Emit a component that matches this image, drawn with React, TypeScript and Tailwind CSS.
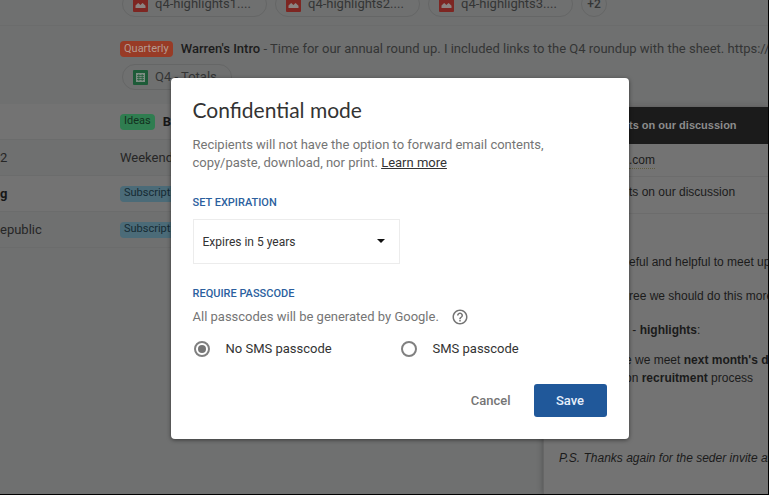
import { useState } from "react";
import { MdHelpOutline } from "react-icons/md";

const highlights = ["q4-highlights1....", "q4-highlights2....", "q4-highlights3...."];

const rows = [
  {
    id: 1,
    sender: "",
    unread: true,
    label: "Ideas",
    labelClass: "bg-[#2f7d50] text-[#12301e]",
    subject: "Business trip",
  },
  {
    id: 2,
    sender: "2",
    unread: false,
    label: null,
    labelClass: "",
    subject: "Weekend",
  },
  {
    id: 3,
    sender: "g",
    unread: true,
    label: "Subscriptions",
    labelClass: "bg-[#4b6b78] text-[#152a33]",
    subject: "",
  },
  {
    id: 4,
    sender: "epublic",
    unread: false,
    label: "Subscriptions",
    labelClass: "bg-[#4b6b78] text-[#152a33]",
    subject: "",
  },
];

const passcodeOptions = ["No SMS passcode", "SMS passcode"];

function ImageIcon() {
  return (
    <svg viewBox="0 0 15 15" className="w-[15px] h-[15px] shrink-0" aria-hidden="true">
      <rect width="15" height="15" rx="1" fill="#7d2622" />
      <path
        d="M2.5 11V8.6L4.6 6.4Q5.2 5.8 5.8 6.4L7.4 8L9 6.4Q9.6 5.8 10.2 6.4L12.5 8.8V11Z"
        fill="#8c8482"
      />
    </svg>
  );
}

function SheetIcon() {
  return (
    <svg viewBox="0 0 15 15" className="w-[15px] h-[15px] shrink-0" aria-hidden="true">
      <rect width="15" height="15" rx="1" fill="#1d5b38" />
      <rect x="3" y="3" width="9" height="9" fill="#7d8d83" />
      <path
        d="M4 5.5H11M4 7.5H11M4 9.5H11M5.8 4V11M9.2 4V11"
        fill="none"
        stroke="#1d5b38"
        strokeWidth="0.7"
      />
    </svg>
  );
}

function Inbox() {
  return (
    <div className="h-full overflow-hidden bg-[#6f7070] text-[13px] text-[#343535] whitespace-nowrap">
      <div className="h-[26px] pl-[122px] flex items-end gap-2 pb-2 border-b border-[#6b6c6c]">
        {highlights.map((name) => (
          <span
            key={name}
            className="h-[26px] w-[145px] shrink-0 px-[10px] flex items-center gap-[7px] rounded-full border border-[#656666]"
          >
            <ImageIcon />
            {name}
          </span>
        ))}
        <span className="size-[26px] shrink-0 flex items-center justify-center rounded-full border border-[#656666] text-xs font-medium">
          +2
        </span>
      </div>

      <div className="h-[78px] pt-[14px] pl-[120px]">
        <div className="h-[18px] flex items-center">
          <span className="h-4 px-1 mr-2 flex items-center rounded-sm bg-[#983b26] text-[#b59a91] text-[11px]">
            Quarterly
          </span>
          <span className="font-medium text-[#1c1c1c]">Warren's Intro</span>
          <span>
            &nbsp;- Time for our annual round up. I included links to the Q4 roundup with the sheet. https://docs
          </span>
        </div>
        <span className="mt-[6px] ml-[2px] h-[26px] w-[110px] px-[10px] flex items-center gap-[7px] rounded-full border border-[#656666]">
          <SheetIcon />
          Q4 - Totals
        </span>
      </div>

      {rows.map((row) => (
        <div
          key={row.id}
          className={`h-9 flex items-center border-b border-[#6b6c6c] ${
            row.unread ? "bg-[#737373] font-bold text-[#171717]" : "text-[#262626]"
          }`}
        >
          <span className="w-[120px]">{row.sender}</span>
          {row.label && (
            <span
              className={`h-4 px-1 mr-2 flex items-center rounded-sm text-[11px] font-normal ${row.labelClass}`}
            >
              {row.label}
            </span>
          )}
          <span>{row.subject}</span>
        </div>
      ))}
    </div>
  );
}

function Compose() {
  return (
    <div className="absolute left-[543px] right-0 top-[107px] bottom-0 overflow-hidden bg-[#737373] border-l border-[#666666] shadow-[0_0_6px_rgba(0,0,0,0.3)] font-['Liberation_Sans',Arial,sans-serif] text-xs text-[#1b1b1b] whitespace-nowrap">
      <div className="h-[37px] pl-[85px] flex items-center bg-[#1b1b1b] text-[11px] text-[#8c8c8c] font-bold">
        ts on our discussion
      </div>
      <div className="h-[33px] pl-[85px] flex items-center border-b border-[#6c6c6c]">
        <span className="border-b border-dotted border-[#5d5a3c]">.com</span>
      </div>
      <div className="h-[37px] pb-[6px] pl-[85px] flex items-center border-b border-[#6c6c6c]">
        ts on our discussion
      </div>
      <div className="pt-[39px] pl-[85px] leading-[18px]">
        <p>eful and helpful to meet up</p>
        <p className="mt-4">ree we should do this more</p>
        <p className="mt-4">
          &nbsp;- <b>highlights</b>:
        </p>
        <div className="mt-3 -ml-1">
          <p>
            e we meet <b>next month's de</b>
          </p>
          <p>
            on <b>recruitment</b> process
          </p>
        </div>
      </div>
      <p className="mt-[62px] pl-[15px] leading-[18px] italic">
        P.S. Thanks again for the seder invite after
      </p>
    </div>
  );
}

function ConfidentialDialog() {
  const [passcode, setPasscode] = useState(passcodeOptions[0]);

  return (
    <div
      role="dialog"
      aria-labelledby="dialog-title"
      className="w-[458px] px-[22px] pt-[18px] pb-[22px] rounded bg-white shadow-[0_1px_4px_rgba(0,0,0,0.5)] text-[13px] text-[#757575]"
    >
      <h1
        id="dialog-title"
        className="font-['Lato',sans-serif] text-[21px] leading-7 text-[#333333]"
      >
        Confidential mode
      </h1>
      <p className="mt-3 leading-[18px]">
        Recipients will not have the option to forward email contents,
        <br />
        copy/paste, download, nor print.{" "}
        <a href="#learn-more" className="text-[#333333] underline">
          Learn more
        </a>
      </p>

      <label
        htmlFor="expiration"
        className="mt-[23px] block text-[11px] leading-4 font-medium text-[#2c5f9e]"
      >
        SET EXPIRATION
      </label>
      <div className="relative mt-2 w-[207px]">
        <select
          id="expiration"
          defaultValue="5y"
          className="h-[45px] w-full pl-[9px] appearance-none border border-[#ececec] bg-white text-xs text-[#333333]"
        >
          <option value="1d">Expires in 1 day</option>
          <option value="1w">Expires in 1 week</option>
          <option value="5y">Expires in 5 years</option>
        </select>
        <svg
          viewBox="0 0 8 4"
          className="pointer-events-none absolute right-[15px] top-5 w-2 h-1"
          aria-hidden="true"
        >
          <path d="M0 0H8L4 4Z" fill="#111111" />
        </svg>
      </div>

      <fieldset>
        <legend className="pt-[22px] text-[11px] leading-4 font-medium text-[#2c5f9e]">
          REQUIRE PASSCODE
        </legend>
        <div className="mt-[6px] h-[18px] flex items-center gap-3">
          All passcodes will be generated by Google.
          <MdHelpOutline size={18} aria-label="Help" />
        </div>
        <div className="mt-[13px] grid grid-cols-2">
          {passcodeOptions.map((option) => (
            <label key={option} className="h-5 flex items-center gap-4 text-[#333333]">
              <input
                type="radio"
                name="passcode"
                checked={passcode === option}
                onChange={() => setPasscode(option)}
                className="ml-px size-4 appearance-none rounded-full border-2 border-[#808080] grid place-content-center checked:before:size-2 checked:before:rounded-full checked:before:bg-[#757575] checked:before:content-['']"
              />
              {option}
            </label>
          ))}
        </div>
      </fieldset>

      <div className="mt-[25px] flex justify-end items-center gap-[23px] font-medium">
        <button type="button" className="h-[33px]">
          Cancel
        </button>
        <button type="button" className="h-[33px] w-[73px] rounded-[3px] bg-[#20589a] text-[#e6effa]">
          Save
        </button>
      </div>
    </div>
  );
}

export default function App() {
  return (
    <div className="relative h-screen overflow-hidden border-r border-b border-black font-['Roboto',sans-serif]">
      <Inbox />
      <Compose />
      <div className="absolute inset-0 flex items-start justify-center pt-[78px] pl-[31px]">
        <ConfidentialDialog />
      </div>
    </div>
  );
}
